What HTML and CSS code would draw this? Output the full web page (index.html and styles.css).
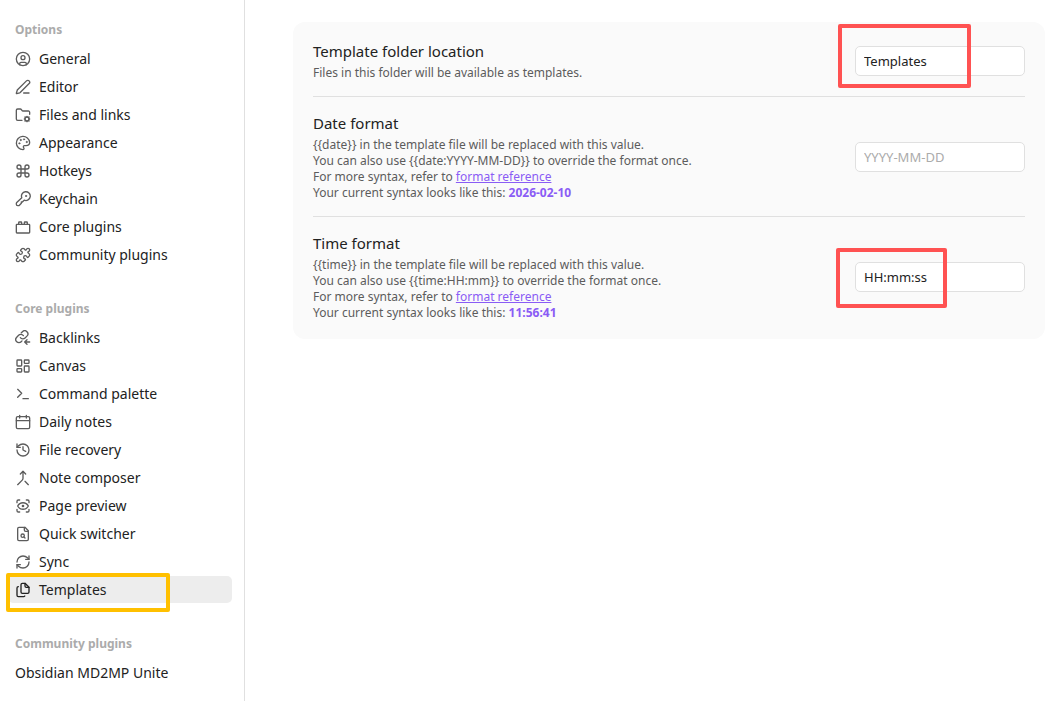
FILE: index.html
```html
<!DOCTYPE html>
<html lang="en">
<head>
    <meta charset="UTF-8">
    <meta name="viewport" content="width=device-width, initial-scale=1.0">
    <title>Settings - Templates</title>
    <link rel="stylesheet" href="styles.css">
</head>
<body>

    <nav class="sidebar">
        <section class="group">
            <h2 class="group-title">Options</h2>
            <button class="item"><svg class="icon" viewBox="0 0 24 24"><circle cx="12" cy="12" r="10"/><circle cx="12" cy="10" r="3"/><path d="M7 20.7V19a2 2 0 0 1 2-2h6a2 2 0 0 1 2 2v1.7"/></svg>General</button>
            <button class="item"><svg class="icon" viewBox="0 0 24 24"><path d="M13 21h8"/><path d="M21.2 6.8a1 1 0 0 0-4-4L3.8 16.2a2 2 0 0 0-.5.8L2 21.4a.5.5 0 0 0 .6.6l4.4-1.3a2 2 0 0 0 .8-.5z"/></svg>Editor</button>
            <button class="item"><svg class="icon" viewBox="0 0 24 24"><path d="M10.5 20H4a2 2 0 0 1-2-2V5a2 2 0 0 1 2-2h3.9a2 2 0 0 1 1.7.9l.8 1.2a2 2 0 0 0 1.700.9H20a2 2 0 0 1 2 2v3"/><circle cx="18" cy="18" r="3"/><path d="M18 14v1M18 21v1M22 18h-1M15 18h-1M21 15l-.9.9M15.9 20.1l-.9.9M21 21l-.9-.9M15.9 15.9L15 15"/></svg>Files and links</button>
            <button class="item"><svg class="icon" viewBox="0 0 24 24"><path d="M12 22a10 10 0 1 1 10-11c0 3.1-2.5 5-5.5 5h-2.250a1.750 1.750 0 0 0-1.4 2.8l.3.4a1.750 1.750 0 0 1-1.150 2.8z"/><circle class="dot" cx="13.5" cy="6.5" r="1"/><circle class="dot" cx="17.5" cy="10.5" r="1"/><circle class="dot" cx="6.5" cy="12.5" r="1"/><circle class="dot" cx="8.5" cy="7.5" r="1"/></svg>Appearance</button>
            <button class="item"><svg class="icon" viewBox="0 0 24 24"><path d="M15 6v12a3 3 0 1 0 3-3H6a3 3 0 1 0 3 3V6a3 3 0 1 0-3 3h12a3 3 0 1 0-3-3"/></svg>Hotkeys</button>
            <button class="item"><svg class="icon" viewBox="0 0 24 24"><path d="M10.2 10.2a6.6 6.6 0 1 1 3.600 3.600L11 16.500H9.500V18.500L6.600 21.400A2 2 0 0 1 5.200 22H4a2 2 0 0 1-2-2v-1.200a2 2 0 0 1 .6-1.400z"/><circle class="dot" cx="16.5" cy="7.5" r="1"/></svg>Keychain</button>
            <button class="item"><svg class="icon" viewBox="0 0 24 24"><rect x="2" y="8" width="20" height="13" rx="1"/><path d="M10 8V5.500a1 1 0 0 0-1-1H6.500a1 1 0 0 0-1 1V8M18.500 8V5.500a1 1 0 0 0-1-1H15a1 1 0 0 0-1 1V8"/></svg>Core plugins</button>
            <button class="item"><svg class="icon" viewBox="0 0 24 24"><path d="M15.390 4.390a1 1 0 0 0 1.680-.474 2.500 2.500 0 1 1 3.014 3.015 1 1 0 0 0-.474 1.680l1.683 1.682a2.414 2.414 0 0 1 0 3.414L19.610 15.390a1 1 0 0 1-1.680-.474 2.500 2.500 0 1 0-3.014 3.015 1 1 0 0 1 .474 1.680l-1.683 1.682a2.414 2.414 0 0 1-3.414 0L8.610 19.610a1 1 0 0 0-1.680.474 2.500 2.500 0 1 1-3.014-3.015 1 1 0 0 0 .474-1.680l-1.683-1.682a2.414 2.414 0 0 1 0-3.414L4.390 8.610a1 1 0 0 1 1.680.474 2.500 2.500 0 1 0 3.014-3.015 1 1 0 0 1-.474-1.680l1.683-1.682a2.414 2.414 0 0 1 3.414 0z"/></svg>Community plugins</button>
        </section>

        <section class="group">
            <h2 class="group-title">Core plugins</h2>
            <button class="item"><svg class="icon" viewBox="0 0 24 24"><path d="M8 11.500a4.700 4.700 0 0 0 7.100.5l2.800-2.800a4.700 4.700 0 0 0-6.700-6.700L9.500 4.200"/><path d="M12.500 8.500a4.700 4.700 0 0 0-7.100-.5l-2.800 2.800a4.700 4.700 0 0 0 6.700 6.700l1.200-1.200"/><path d="M22 18h-7M18 14.500L14.500 18l3.500 3.500"/></svg>Backlinks</button>
            <button class="item"><svg class="icon" viewBox="0 0 24 24"><rect x="3" y="3" width="7" height="9" rx="1"/><rect x="14" y="3" width="7" height="5" rx="1"/><rect x="14" y="12" width="7" height="9" rx="1"/><rect x="3" y="16" width="7" height="5" rx="1"/></svg>Canvas</button>
            <button class="item"><svg class="icon" viewBox="0 0 24 24"><path d="M4 17l6-6-6-6M12 19h8"/></svg>Command palette</button>
            <button class="item"><svg class="icon" viewBox="0 0 24 24"><rect x="2" y="4" width="20" height="18" rx="2"/><path d="M7 2v4M17 2v4M2 10h20"/></svg>Daily notes</button>
            <button class="item"><svg class="icon" viewBox="0 0 24 24"><path d="M3 12a9 9 0 1 0 9-9 9.750 9.750 0 0 0-6.740 2.740L3 8"/><path d="M3 3v5h5M12 7v5l4 2"/></svg>File recovery</button>
            <button class="item"><svg class="icon" viewBox="0 0 24 24"><path d="M8 6l4-4 4 4"/><path d="M12 2v10.300a4 4 0 0 1-1.170 2.870L4 22M20 22l-5-5"/></svg>Note composer</button>
            <button class="item"><svg class="icon" viewBox="0 0 24 24"><path d="M3 7V5a2 2 0 0 1 2-2h2M17 3h2a2 2 0 0 1 2 2v2M21 17v2a2 2 0 0 1-2 2h-2M7 21H5a2 2 0 0 1-2-2v-2"/><circle cx="12" cy="12" r="1"/><path d="M4 12a9 9 0 0 1 16 0 9 9 0 0 1-16 0"/></svg>Page preview</button>
            <button class="item"><svg class="icon" viewBox="0 0 24 24"><path d="M15 2H6a2 2 0 0 0-2 2v16a2 2 0 0 0 2 2h12a2 2 0 0 0 2-2V7z"/><path d="M14 2v4a2 2 0 0 0 2 2h4"/><circle cx="11.5" cy="14.5" r="2.5"/><path d="M13.3 16.3L15 18"/></svg>Quick switcher</button>
            <button class="item"><svg class="icon" viewBox="0 0 24 24"><path d="M3 12a9 9 0 0 1 9-9 9.750 9.750 0 0 1 6.740 2.740L21 8"/><path d="M21 3v5h-5"/><path d="M21 12a9 9 0 0 1-9 9 9.750 9.750 0 0 1-6.740-2.740L3 16"/><path d="M8 16H3v5"/></svg>Sync</button>
            <button class="item active"><svg class="icon" viewBox="0 0 24 24"><path d="M15 2h-4a2 2 0 0 0-2 2v11a2 2 0 0 0 2 2h8a2 2 0 0 0 2-2V8z"/><path d="M15 2v4a2 2 0 0 0 2 2h4"/><path d="M5 7a2 2 0 0 0-2 2v11a2 2 0 0 0 2 2h8a2 2 0 0 0 1.700-1"/></svg>Templates<span class="mark mark-nav"></span></button>
        </section>

        <section class="group">
            <h2 class="group-title">Community plugins</h2>
            <button class="item">Obsidian MD2MP Unite</button>
        </section>
    </nav>

    <main class="content">
        <div class="panel">
            <div class="setting">
                <div class="info">
                    <label class="name" for="folder">Template folder location</label>
                    <p class="desc">Files in this folder will be available as templates.</p>
                </div>
                <div class="control">
                    <input type="text" id="folder" value="Templates">
                    <span class="mark mark-folder"></span>
                </div>
            </div>
            <div class="setting">
                <div class="info">
                    <label class="name" for="date">Date format</label>
                    <p class="desc">
                        {{date}} in the template file will be replaced with this value.<br>
                        You can also use {{date:YYYY-MM-DD}} to override the format once.<br>
                        For more syntax, refer to <a href="#">format reference</a><br>
                        Your current syntax looks like this: <b>2026-02-10</b>
                    </p>
                </div>
                <div class="control">
                    <input type="text" id="date" placeholder="YYYY-MM-DD">
                </div>
            </div>
            <div class="setting">
                <div class="info">
                    <label class="name" for="time">Time format</label>
                    <p class="desc">
                        {{time}} in the template file will be replaced with this value.<br>
                        You can also use {{time:HH:mm}} to override the format once.<br>
                        For more syntax, refer to <a href="#">format reference</a><br>
                        Your current syntax looks like this: <b>11:56:41</b>
                    </p>
                </div>
                <div class="control">
                    <input type="text" id="time" value="HH:mm:ss">
                    <span class="mark mark-time"></span>
                </div>
            </div>
        </div>
    </main>

</body>
</html>
```
FILE: styles.css
```css
* {
    box-sizing: border-box;
}

body {
    margin: 0;
    display: flex;
    min-height: 100vh;
    background-color: white;
    color: #222;
    font-family: "Noto Sans", "Open Sans", sans-serif;
    font-size: 14px;
}

/* sidebar */
.sidebar {
    flex: none;
    width: 245px;
    padding: 16px 12px 16px 8px;
    border-right: 1px solid #e0e0e0;
    display: flex;
    flex-direction: column;
    gap: 27px;
}

.group {
    display: flex;
    flex-direction: column;
    gap: 1px;
}

.group-title {
    margin: 0;
    padding-left: 7px;
    font-size: 12px;
    font-weight: 700;
    line-height: 28px;
    color: #ababab;
}

.item {
    position: relative;
    display: flex;
    align-items: center;
    gap: 8px;
    height: 27px;
    padding: 0 7px;
    border: none;
    border-radius: 5px;
    background: none;
    color: #222;
    font: inherit;
    text-align: left;
    cursor: pointer;
}

.active {
    background-color: #ededed;
}

.icon {
    width: 16px;
    height: 16px;
    fill: none;
    stroke: #5c5c5c;
    stroke-width: 2;
    stroke-linecap: round;
    stroke-linejoin: round;
}

.icon .dot {
    fill: #5c5c5c;
    stroke-width: 1;
}

.active .icon {
    stroke: #222;
}

/* settings */
.content {
    flex: 1;
    padding: 22px 4px 22px 48px;
}

.panel {
    padding: 3px 20px;
    border-radius: 12px;
    background-color: #fafafa;
}

.setting {
    display: flex;
    align-items: center;
    justify-content: space-between;
    gap: 16px;
    padding: 15px 0;
}

.setting:not(:last-child) {
    border-bottom: 1px solid #e0e0e0;
}

.name {
    display: block;
    margin-bottom: 3px;
    font-size: 15px;
    line-height: 22px;
}

.desc {
    margin: 0;
    font-size: 12px;
    line-height: 16px;
    color: #5c5c5c;
}

.desc a,
.desc b {
    color: #8a5cf5;
}

.control {
    position: relative;
    flex: none;
}

.control input {
    display: block;
    width: 170px;
    height: 30px;
    padding: 0 8px;
    border: 1px solid #e0e0e0;
    border-radius: 5px;
    background-color: white;
    color: #222;
    font: inherit;
    font-size: 13px;
}

.control input::placeholder {
    color: #ababab;
}

/* highlight frames */
.mark {
    position: absolute;
    border: 4px solid #ff5252;
    border-radius: 2px;
    pointer-events: none;
}

.mark-nav {
    left: -2px;
    top: -3px;
    width: 164px;
    height: 39px;
    border-color: #ffc000;
}

.mark-folder {
    left: -17px;
    top: -22px;
    width: 133px;
    height: 64px;
}

.mark-time {
    left: -19px;
    top: -14px;
    width: 111px;
    height: 60px;
}
```
